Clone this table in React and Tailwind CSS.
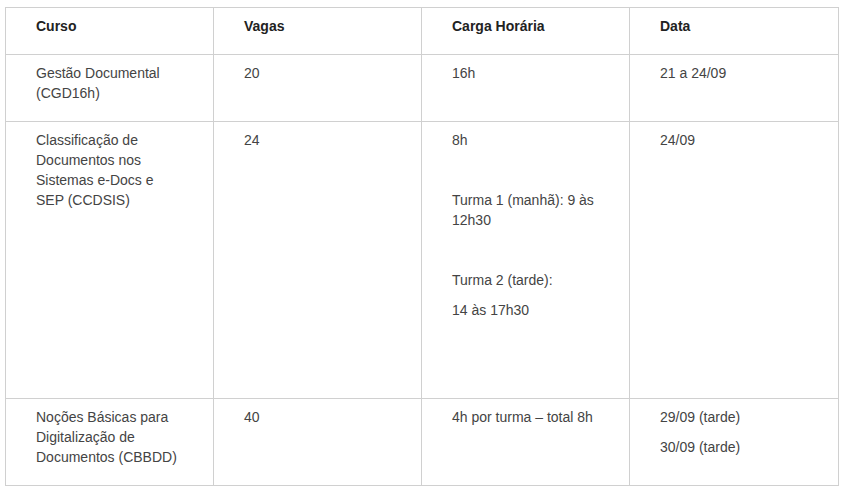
import React from "react";

const cell = "border border-[#d0d0d0] align-top pl-[30px] pr-[34px] pt-[8px] pb-[8px] text-left";
const P = ({ children }) => <p className="mb-[10px] leading-[20px] min-h-[20px]">{children}</p>;

export default function App() {
  return (
    <div className="w-[844px] h-[491px] bg-white pt-[7px] pl-[5px]" style={{ fontFamily: '"Liberation Sans", Arial, sans-serif' }}>
      <table className="border-collapse table-fixed w-[833px] text-[14px] text-[#444]">
        <colgroup>
          <col className="w-[208px]" />
          <col className="w-[208px]" />
          <col className="w-[208px]" />
          <col className="w-[209px]" />
        </colgroup>
        <thead>
          <tr className="text-[#222] font-bold">
            <th className={cell}><P>Curso</P></th>
            <th className={cell}><P>Vagas</P></th>
            <th className={cell}><P>Carga Horária</P></th>
            <th className={cell}><P>Data</P></th>
          </tr>
        </thead>
        <tbody>
          <tr>
            <td className={cell}><P>Gestão Documental (CGD16h)</P></td>
            <td className={cell}><P>20</P></td>
            <td className={cell}><P>16h</P></td>
            <td className={cell}><P>21 a 24/09</P></td>
          </tr>
          <tr className="h-[277px]">
            <td className={cell}><P>Classificação de Documentos nos Sistemas e-Docs e SEP (CCDSIS)</P></td>
            <td className={cell}><P>24</P></td>
            <td className={cell}>
              <P>8h</P>
              <P>{"\u00a0"}</P>
              <P>Turma 1 (manhã): 9 às 12h30</P>
              <P>{"\u00a0"}</P>
              <P>Turma 2 (tarde):</P>
              <P>14 às 17h30</P>
            </td>
            <td className={cell}><P>24/09</P></td>
          </tr>
          <tr>
            <td className={cell}><P>Noções Básicas para Digitalização de Documentos (CBBDD)</P></td>
            <td className={cell}><P>40</P></td>
            <td className={cell}><P>4h por turma – total 8h</P></td>
            <td className={cell}>
              <P>29/09 (tarde)</P>
              <P>30/09 (tarde)</P>
            </td>
          </tr>
        </tbody>
      </table>
    </div>
  );
}
